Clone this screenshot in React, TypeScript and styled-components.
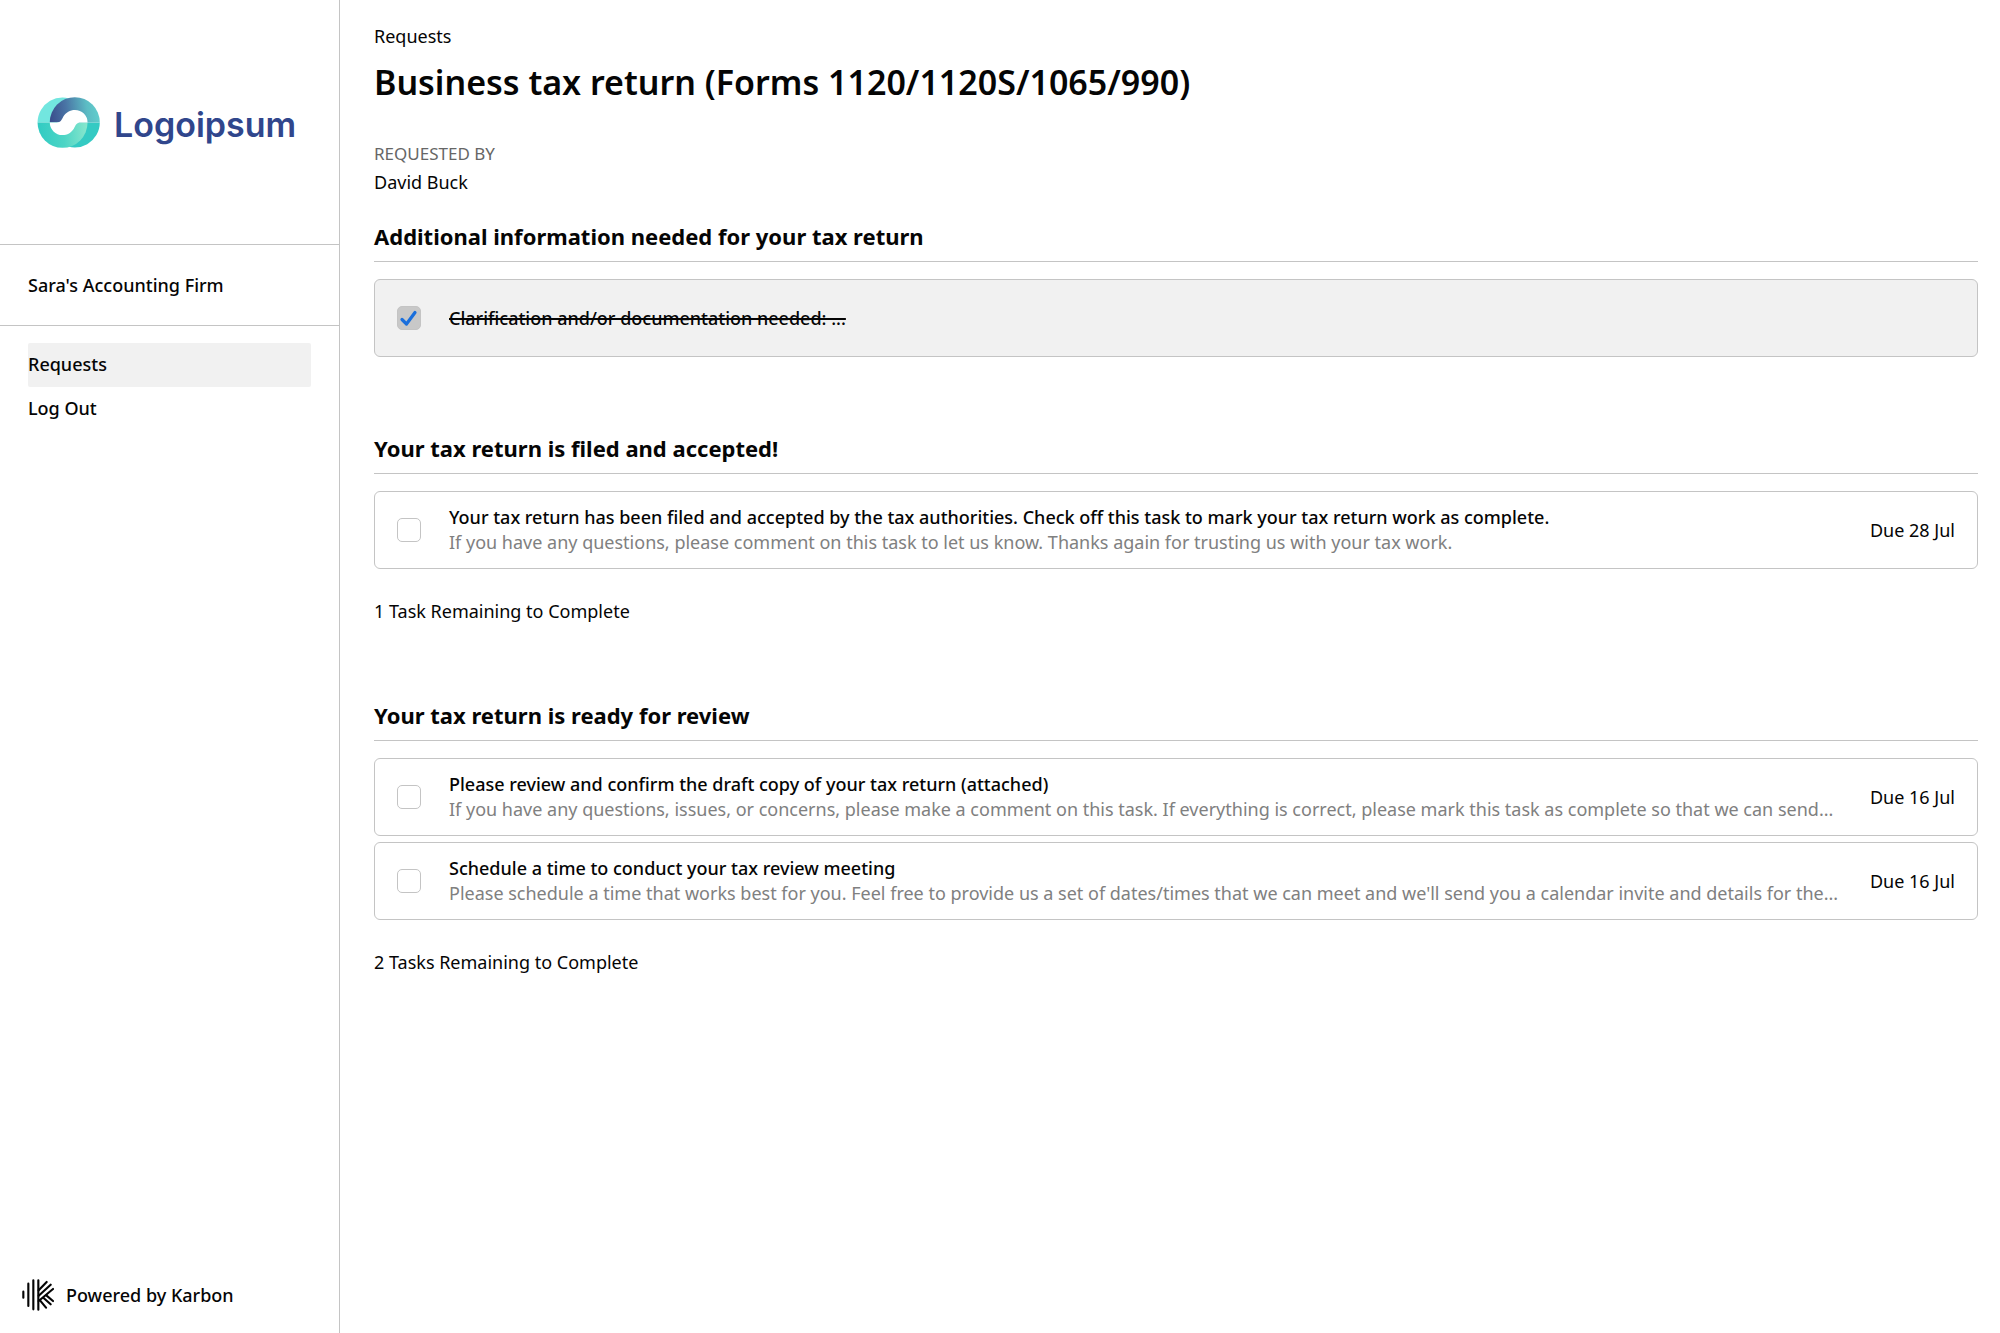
import React, { useState } from "react";
import styled, { createGlobalStyle } from "styled-components";

const GlobalStyle = createGlobalStyle`
  *, *::before, *::after { box-sizing: border-box; }
  body {
    margin: 0;
    background: #fff;
    color: #050505;
    font-family: "Noto Sans", "Open Sans", sans-serif;
    font-size: 18px;
    line-height: 24px;
  }
`;

const line = "1px solid #c4c4c4";

const Page = styled.div`
  display: flex;
  min-height: 100vh;
`;

const Sidebar = styled.aside`
  display: flex;
  flex-direction: column;
  flex: 0 0 340px;
  border-right: ${line};
`;

const Brand = styled.div`
  display: flex;
  align-items: center;
  gap: 14px;
  height: 245px;
  padding-left: 37px;
  border-bottom: ${line};
`;

const BrandName = styled.span`
  padding-top: 6px;
  color: #30468c;
  font-family: Inter, sans-serif;
  font-size: 34px;
  font-weight: 600;
  line-height: 44px;
`;

const Firm = styled.div`
  padding: 28px;
  border-bottom: ${line};
  font-weight: 500;
`;

const Nav = styled.nav`
  display: flex;
  flex-direction: column;
  padding: 17px 28px;
`;

const NavLink = styled.a<{ $active?: boolean }>`
  padding: 9px 0 11px;
  border-radius: 2px;
  background: ${(p) => (p.$active ? "#f1f1f1" : "transparent")};
  color: inherit;
  font-weight: 500;
  text-decoration: none;
`;

const Powered = styled.footer`
  display: flex;
  align-items: center;
  gap: 12px;
  margin-top: auto;
  padding: 22px;
  font-weight: 500;
`;

const Main = styled.main`
  flex: 1;
  min-width: 0;
  padding: 24px 22px 24px 34px;
`;

const Crumb = styled.a`
  display: block;
  color: inherit;
  text-decoration: none;
`;

const Title = styled.h1`
  margin: 12px 0 38px;
  font-size: 34px;
  font-weight: 650;
  line-height: 44px;
`;

const Requester = styled.dl`
  display: grid;
  gap: 4px;
  margin: 0 0 27px;
`;

const RequesterLabel = styled.dt`
  color: #666;
  font-size: 17px;
  text-transform: uppercase;
`;

const RequesterName = styled.dd`
  margin: 0;
`;

const Sections = styled.div`
  display: grid;
  grid-template-columns: minmax(0, 1fr);
  gap: 76px;
`;

const SectionTitle = styled.h2`
  margin: 0 0 17px;
  padding-bottom: 10px;
  border-bottom: ${line};
  font-size: 22px;
  font-weight: 700;
  line-height: 30px;
`;

const TaskList = styled.ul`
  display: grid;
  grid-template-columns: minmax(0, 1fr);
  gap: 6px;
  margin: 0;
  padding: 0;
  list-style: none;
`;

const TaskCard = styled.li<{ $done: boolean }>`
  display: flex;
  align-items: center;
  min-height: 78px;
  padding: 0 22px;
  border: ${line};
  border-radius: 6px;
  background: ${(p) => (p.$done ? "#f1f1f1" : "#fff")};
`;

const CheckWrap = styled.span`
  display: grid;
  flex: none;
  margin-right: 28px;

  & > * {
    grid-area: 1 / 1;
  }

  svg {
    pointer-events: none;
  }
`;

const CheckInput = styled.input`
  appearance: none;
  width: 24px;
  height: 24px;
  margin: 0;
  border: ${line};
  border-radius: 5px;
  background: #fff;

  &:checked {
    background: #c8c8c8;
  }
`;

const TaskText = styled.div`
  flex: 1;
  min-width: 0;
  line-height: 25px;
`;

const TaskName = styled.label<{ $done: boolean }>`
  display: block;
  width: fit-content;
  font-weight: 500;
  text-decoration: ${(p) => (p.$done ? "line-through 2px" : "none")};
`;

const TaskNote = styled.div`
  overflow: hidden;
  color: #808080;
  text-overflow: ellipsis;
  white-space: nowrap;
`;

const Due = styled.span`
  flex: none;
  margin-left: 20px;
`;

const Remaining = styled.p`
  margin: 30px 0 0;
  padding-bottom: 1px;
`;

type Task = { id: string; name: string; note?: string; due?: string; done?: boolean };
type Group = { title: string; tasks: Task[] };

const groups: Group[] = [
  {
    title: "Additional information needed for your tax return",
    tasks: [{ id: "clarify", name: "Clarification and/or documentation needed: ...", done: true }],
  },
  {
    title: "Your tax return is filed and accepted!",
    tasks: [
      {
        id: "filed",
        name: "Your tax return has been filed and accepted by the tax authorities. Check off this task to mark your tax return work as complete.",
        note: "If you have any questions, please comment on this task to let us know. Thanks again for trusting us with your tax work.",
        due: "Due 28 Jul",
      },
    ],
  },
  {
    title: "Your tax return is ready for review",
    tasks: [
      {
        id: "review",
        name: "Please review and confirm the draft copy of your tax return (attached)",
        note: "If you have any questions, issues, or concerns, please make a comment on this task. If everything is correct, please mark this task as complete so that we can send...",
        due: "Due 16 Jul",
      },
      {
        id: "schedule",
        name: "Schedule a time to conduct your tax review meeting",
        note: "Please schedule a time that works best for you. Feel free to provide us a set of dates/times that we can meet and we'll send you a calendar invite and details for the...",
        due: "Due 16 Jul",
      },
    ],
  },
];

function BrandMark() {
  return (
    <svg width="63" height="51" viewBox="51 51 189 154" aria-hidden="true">
      <defs>
        <linearGradient id="upper" x1="90" y1="110" x2="240" y2="90" gradientUnits="userSpaceOnUse">
          <stop offset="0" stopColor="#3a4d8c" />
          <stop offset="0.35" stopColor="#4a76a6" />
          <stop offset="0.75" stopColor="#5cbcc4" />
          <stop offset="1" stopColor="#62cfcd" />
        </linearGradient>
        <linearGradient id="lower" x1="60" y1="150" x2="200" y2="140" gradientUnits="userSpaceOnUse">
          <stop offset="0" stopColor="#33ccc3" />
          <stop offset="0.5" stopColor="#4dd5c5" />
          <stop offset="1" stopColor="#86e6cd" />
        </linearGradient>
      </defs>
      <path d="M52 128A75 76 0 0 1 165 63V128Z" fill="#72e6df" />
      <path d="M240 128A75 76 0 0 1 127 193V128Z" fill="#34cac3" />
      <path d="M89 128A75 76 0 0 1 240 128Z" fill="url(#upper)" />
      <path d="M52 128A75 76 0 0 0 203 128Z" fill="url(#lower)" />
      <path
        d="M89 128H110C122 128 125 120 130 110C138 97 150 90 165 90A38 38 0 0 1 203 128H182C170 128 167 136 162 146C154 159 142 166 127 166A38 38 0 0 1 89 128Z"
        fill="#fff"
      />
    </svg>
  );
}

function KarbonMark() {
  return (
    <svg
      width="32"
      height="32"
      viewBox="66 57 96 96"
      fill="none"
      stroke="#050505"
      strokeWidth="6.4"
      strokeLinecap="round"
      aria-hidden="true"
    >
      <path d="M70 95V113M85 71V138M100 61V148M115 61V149" />
      <path d="M116 91L140 66M116 107L152 74M116 123L159 87" />
      <path d="M139 106L159 123M130 113L152 133M120 121L138 143" />
    </svg>
  );
}

function TaskRow({ task }: { task: Task }) {
  const [done, setDone] = useState(Boolean(task.done));
  return (
    <TaskCard $done={done}>
      <CheckWrap>
        <CheckInput id={task.id} type="checkbox" checked={done} onChange={(e) => setDone(e.target.checked)} />
        {done && (
          <svg width="24" height="24" viewBox="0 0 24 24" fill="none" aria-hidden="true">
            <path d="M5 13.5L9.5 18L18 6.5" stroke="#1a6fdc" strokeWidth="3.2" strokeLinecap="round" strokeLinejoin="round" />
          </svg>
        )}
      </CheckWrap>
      <TaskText>
        <TaskName htmlFor={task.id} $done={done}>
          {task.name}
        </TaskName>
        {task.note && <TaskNote>{task.note}</TaskNote>}
      </TaskText>
      {task.due && <Due>{task.due}</Due>}
    </TaskCard>
  );
}

export default function App() {
  return (
    <>
      <GlobalStyle />
      <Page>
        <Sidebar>
          <Brand>
            <BrandMark />
            <BrandName>Logoipsum</BrandName>
          </Brand>
          <Firm>Sara's Accounting Firm</Firm>
          <Nav>
            <NavLink href="#requests" $active>
              Requests
            </NavLink>
            <NavLink href="#logout">Log Out</NavLink>
          </Nav>
          <Powered>
            <KarbonMark />
            Powered by Karbon
          </Powered>
        </Sidebar>
        <Main>
          <Crumb href="#requests">Requests</Crumb>
          <Title>Business tax return (Forms 1120/1120S/1065/990)</Title>
          <Requester>
            <RequesterLabel>Requested by</RequesterLabel>
            <RequesterName>David Buck</RequesterName>
          </Requester>
          <Sections>
            {groups.map((group) => {
              const open = group.tasks.filter((t) => !t.done).length;
              return (
                <section key={group.title}>
                  <SectionTitle>{group.title}</SectionTitle>
                  <TaskList>
                    {group.tasks.map((task) => (
                      <TaskRow key={task.id} task={task} />
                    ))}
                  </TaskList>
                  {open > 0 && <Remaining>{`${open} ${open === 1 ? "Task" : "Tasks"} Remaining to Complete`}</Remaining>}
                </section>
              );
            })}
          </Sections>
        </Main>
      </Page>
    </>
  );
}
